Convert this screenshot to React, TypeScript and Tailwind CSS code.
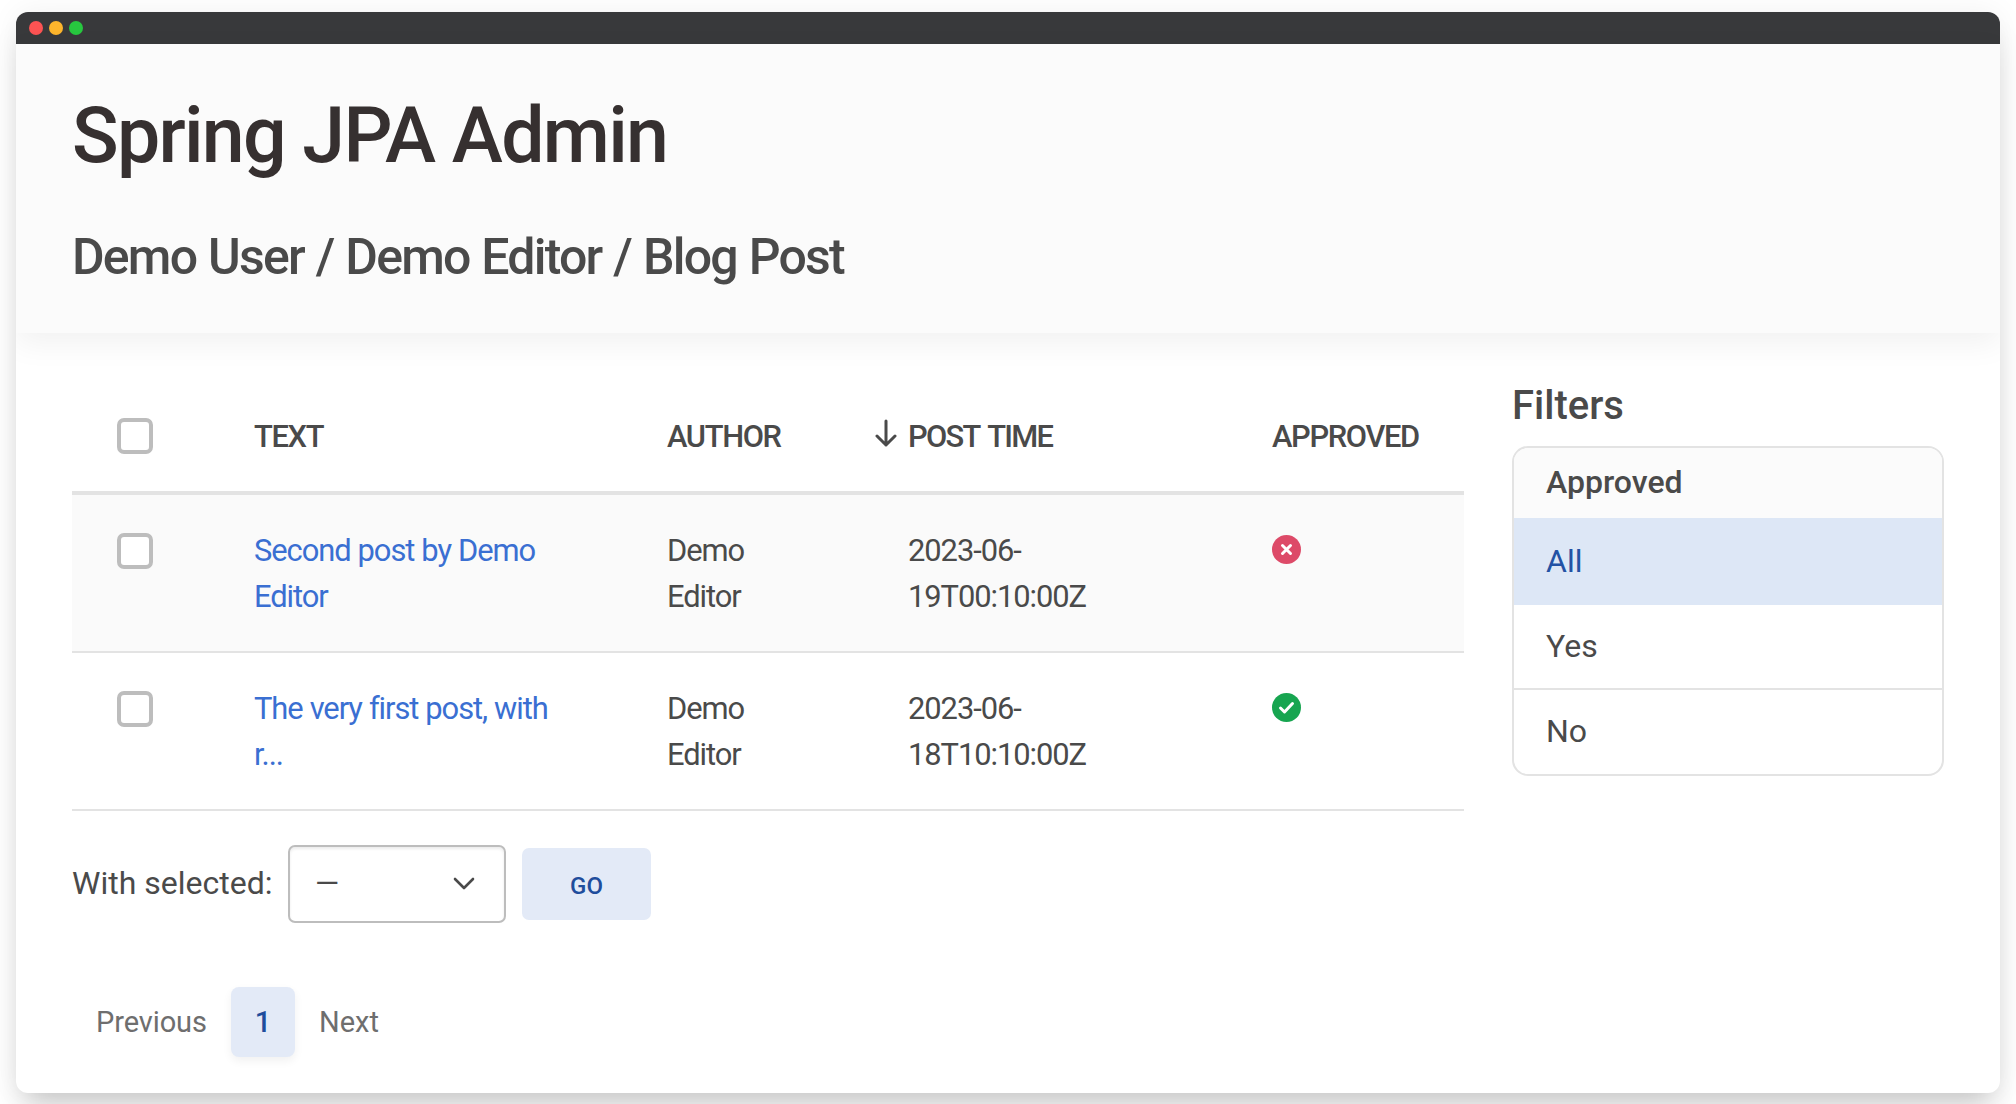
import React from "react";

const font = { fontFamily: "Roboto, sans-serif" };

function Box() {
  return <span className="block w-[36px] h-[36px] rounded-[7px] border-[4px] border-[#bdbdbd] bg-white" />;
}

function Status({ ok }: { ok: boolean }) {
  return (
    <svg width="29" height="29" viewBox="0 0 29 29" className="mt-[7px] block">
      <circle cx="14.5" cy="14.5" r="14.5" fill={ok ? "#17a550" : "#dd4a68"} />
      {ok ? (
        <path d="M8.5 15l4 4 8-8.5" fill="none" stroke="#fff" strokeWidth="3" strokeLinecap="round" strokeLinejoin="round" />
      ) : (
        <path d="M10.5 10.5l8 8M18.5 10.5l-8 8" fill="none" stroke="#fff" strokeWidth="3" strokeLinecap="round" />
      )}
    </svg>
  );
}

function Row({ text, time, ok, tint }: { text: React.ReactNode; time: React.ReactNode; ok: boolean; tint: boolean }) {
  return (
    <tr className={`border-b-[2px] border-[#e3e3e3] tracking-[-1.05px] ${tint ? "bg-[#fafafa]" : "bg-white"}`}>
      <td className="pl-[45px] pt-[38px] pb-[31px] align-top"><Box /></td>
      <td className="pt-[33px] pb-[31px] align-top text-[#3a6fd2] [word-spacing:0.4px]">{text}</td>
      <td className="pt-[33px] pb-[31px] align-top">Demo<br />Editor</td>
      <td className="pt-[33px] pb-[31px] align-top">{time}</td>
      <td className="pt-[33px] pb-[31px] align-top"><Status ok={ok} /></td>
    </tr>
  );
}

export default function App() {
  return (
    <div className="w-[2016px] h-[1104px] bg-white pt-[12px] px-[16px] overflow-hidden" style={font}>
      <div className="h-[1081px] rounded-[12px] bg-white shadow-[0_0_30px_rgba(0,0,0,0.06),0_20px_30px_-8px_rgba(0,0,0,0.2)] overflow-hidden text-[#4a4a4a] text-[30.86px] leading-[46px]">
        <div className="h-[32px] bg-[#38393b] flex items-center gap-[6px] pl-[13px]">
          <span className="w-[14px] h-[14px] rounded-full bg-[#fc5353]" />
          <span className="w-[14px] h-[14px] rounded-full bg-[#fdb52c]" />
          <span className="w-[14px] h-[14px] rounded-full bg-[#27c83f]" />
        </div>
        <header className="h-[289px] bg-[#fbfbfb] pl-[56px] pt-[46px] shadow-[0_10px_30px_rgba(0,0,0,0.06)] relative">
          <h1 className="text-[77px] leading-[92px] font-medium text-[#363030] tracking-[-1.72px]">Spring JPA Admin</h1>
          <h2 className="mt-[47px] text-[50px] leading-[56px] font-medium text-[#4a4a4a] tracking-[-1.78px] [word-spacing:1.2px]">Demo User / Demo Editor / Blog Post</h2>
        </header>
        <main className="flex pl-[56px] pt-[48px]">
          <div className="w-[1392px]">
            <table className="w-full table-fixed border-collapse">
              <thead>
                <tr className="border-b-[4px] border-[#e3e3e3] text-left uppercase tracking-[-1.35px]">
                  <th className="w-[182px] pl-[45px] pt-[37px] pb-[27px] font-medium align-top"><Box /></th>
                  <th className="w-[413px] pt-[33px] pb-[31px] font-medium align-top">Text</th>
                  <th className="w-[241px] pt-[33px] pb-[31px] font-medium align-top">Author</th>
                  <th className="w-[364px] pt-[33px] pb-[31px] font-medium align-top">
                    <span className="relative block tracking-[-1.7px] [word-spacing:3px]">
                      <svg width="24" height="28" viewBox="0 0 24 28" fill="none" stroke="#4a4a4a" strokeWidth="3" strokeLinecap="round" strokeLinejoin="round" className="absolute left-[-34px] top-[5px]">
                        <path d="M12 2v24M3 17l9 9 9-9" />
                      </svg>
                      Post Time
                    </span>
                  </th>
                  <th className="w-[192px] pt-[33px] pb-[31px] font-medium align-top">Approved</th>
                </tr>
              </thead>
              <tbody>
                <Row tint text={<>Second post by Demo<br />Editor</>} time={<>2023-06-<br />19T00:10:00Z</>} ok={false} />
                <Row tint={false} text={<>The very first post, with<br />r...</>} time={<>2023-06-<br />18T10:10:00Z</>} ok />
              </tbody>
            </table>
            <div className="flex items-center mt-[34px]">
              <span className="w-[216px] text-[32px] pb-[2px]">With selected:</span>
              <div className="w-[218px] h-[78px] rounded-[7px] border-[2px] border-[#bdbdbd] flex items-center justify-between pl-[25px] pr-[29px] shadow-[inset_0_2px_3px_rgba(0,0,0,0.08)]">
                <span>—</span>
                <svg width="22" height="14" viewBox="0 0 22 14" fill="none" stroke="#4a4a4a" strokeWidth="2.6" strokeLinecap="round" strokeLinejoin="round">
                  <path d="M2 2l9 9 9-9" />
                </svg>
              </div>
              <button className="ml-[16px] w-[129px] h-[72px] pt-[3px] rounded-[7px] bg-[#e3eaf7] text-[#1f4d9c] text-[24px] font-medium">GO</button>
            </div>
            <nav className="flex items-center mt-[64px] ml-[24px]">
              <span className="text-[#6e6e6e] text-[29px] w-[135px] tracking-[-0.1px]">Previous</span>
              <span className="w-[64px] h-[70px] rounded-[8px] bg-[#e3eaf7] text-[#1f4d9c] text-[29px] font-medium flex items-center justify-center shadow-[0_4px_10px_rgba(0,0,0,0.06)]">1</span>
              <span className="text-[#6e6e6e] text-[29px] ml-[24px]">Next</span>
            </nav>
          </div>
          <aside className="ml-[48px] w-[432px] mt-[1px] text-[32px]">
            <h3 className="text-[40px] leading-[48px] font-medium">Filters</h3>
            <div className="mt-[16px] rounded-[16px] border-[2px] border-[#e3e3e3] overflow-hidden">
              <div className="h-[70px] bg-[#fbfbfb] pl-[32px] pb-[2px] flex items-center font-medium">Approved</div>
              <div className="h-[87px] -mx-[2px] bg-[#dde7f6] text-[#2352a4] pl-[34px] pb-[2px] flex items-center">All</div>
              <div className="h-[85px] border-b-[2px] border-[#e3e3e3] pl-[32px] pb-[2px] flex items-center">Yes</div>
              <div className="h-[84px] pl-[32px] pb-[2px] flex items-center">No</div>
            </div>
          </aside>
        </main>
      </div>
    </div>
  );
}
